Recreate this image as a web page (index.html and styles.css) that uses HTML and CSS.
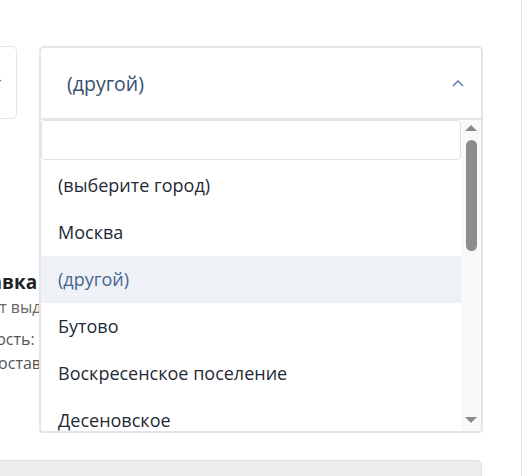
FILE: index.html
```html
<!DOCTYPE html>
<html>
<head>
    <title>Оформление заказа</title>
    <link rel="stylesheet" href="styles.css">
</head>
<body>
    <div class="page">
        <div class="form">
            <div class="row">
                <div class="field field-small">
                    <span class="value">Россия</span>
                    <svg class="chevron" width="11" height="7" viewBox="0 0 11 7"><path d="M1 1l4.5 4.5L10 1" fill="none" stroke="#6b7a8c" stroke-width="1.2"/></svg>
                </div>

                <div class="select-wrap">
                    <div class="select">
                        <span class="current">(другой)</span>
                        <svg class="chevron" width="12" height="7" viewBox="0 0 12 7"><path d="M1 6l5-5 5 5" fill="none" stroke="#4a6fa5" stroke-width="1.3"/></svg>
                    </div>

                    <!-- open list of cities -->
                    <div class="dropdown">
                        <div class="list">
                            <input class="search" type="text">
                            <div class="option">(выберите город)</div>
                            <div class="option">Москва</div>
                            <div class="option active">(другой)</div>
                            <div class="option">Бутово</div>
                            <div class="option">Воскресенское поселение</div>
                            <div class="option">Десеновское</div>
                        </div>
                        <div class="scrollbar">
                            <span class="arrow up"></span>
                            <span class="thumb"></span>
                            <span class="arrow down"></span>
                        </div>
                    </div>
                </div>
            </div>

            <div class="delivery">
                <div class="title">Доставка</div>
                <div class="details">
                    <div class="note">Сможет выдать курьер или пункт самовывоза</div>
                    <p class="info">Стоимость: рассчитывается при заказе<br>Срок доставки: от 2 дней</p>
                </div>
            </div>

            <div class="bottom-bar"></div>
        </div>
    </div>
</body>
</html>
```

FILE: styles.css
```css
body {
    margin: 0;
    font-family: "Open Sans", "Noto Sans", sans-serif;
    background: #fff;
}

.page {
    width: 521px;
    height: 476px;
    border-right: 1px solid #e6e6e6;
    overflow: hidden;
}

.form {
    margin-left: -183px;
    padding-top: 46px;
}

.row {
    display: flex;
    gap: 22px;
}

.field {
    width: 200px;
    height: 73px;
    box-sizing: border-box;
    border: 1px solid #e1e5ea;
    border-radius: 5px;
    display: flex;
    align-items: center;
    justify-content: space-between;
    padding: 0 14px 0 24px;
    color: #34506e;
    font-size: 19px;
}

.select-wrap {
    position: relative;
    width: 444px;
}

.select {
    height: 73px;
    box-sizing: border-box;
    border: 2px solid #e2e6ec;
    border-bottom-width: 1px;
    border-radius: 5px 5px 0 0;
    display: flex;
    align-items: center;
    justify-content: space-between;
    padding: 0 17px 0 26px;
    color: #34506e;
    font-size: 19.5px;
}

.dropdown {
    position: absolute;
    top: 72px;
    left: 0;
    width: 444px;
    height: 315px;
    box-sizing: border-box;
    background: #fff;
    border: 2px solid #e2e6ec;
    border-radius: 0 0 4px 4px;
    display: flex;
    overflow: hidden;
}

.list {
    width: 420px;
    overflow: hidden;
}

.search {
    display: block;
    width: 420px;
    height: 40px;
    box-sizing: border-box;
    margin: 0 0 2px;
    border: 1px solid #dde2e8;
    border-radius: 4px;
    outline: none;
}

.option {
    height: 47px;
    line-height: 47px;
    padding-left: 17px;
    font-size: 18px;
    color: #1f2a36;
    white-space: nowrap;
}

.option.active {
    background: #eef1f5;
    color: #466591;
}

.scrollbar {
    width: 20px;
    background: #f9f9f9;
    position: relative;
    display: flex;
    flex-direction: column;
    align-items: center;
}

.arrow {
    width: 0;
    height: 0;
    border-left: 6px solid transparent;
    border-right: 6px solid transparent;
}

.arrow.up {
    margin-top: 5px;
    border-bottom: 6px solid #8a8a8a;
}

.arrow.down {
    margin-top: auto;
    margin-bottom: 8px;
    border-top: 6px solid #8a8a8a;
}

.thumb {
    width: 11px;
    height: 111px;
    margin-top: 9px;
    border-radius: 6px;
    background: #8c8c8c;
}

.delivery {
    margin-top: 150px;
    padding-left: 127px;
    white-space: nowrap;
}

.title {
    font-size: 19px;
    font-weight: bold;
    color: #222;
    line-height: 26px;
}

.details {
    padding-left: 3px;
}

.note {
    font-size: 16px;
    color: #666;
    line-height: 22px;
    margin-top: 1px;
}

.info {
    margin: 9px 0 0;
    font-size: 16px;
    color: #555;
    line-height: 24px;
}

.bottom-bar {
    margin-top: 85px;
    width: 665px;
    height: 60px;
    box-sizing: border-box;
    background: #ededed;
    border: 1px solid #e2e2e2;
    border-radius: 5px;
}
```
